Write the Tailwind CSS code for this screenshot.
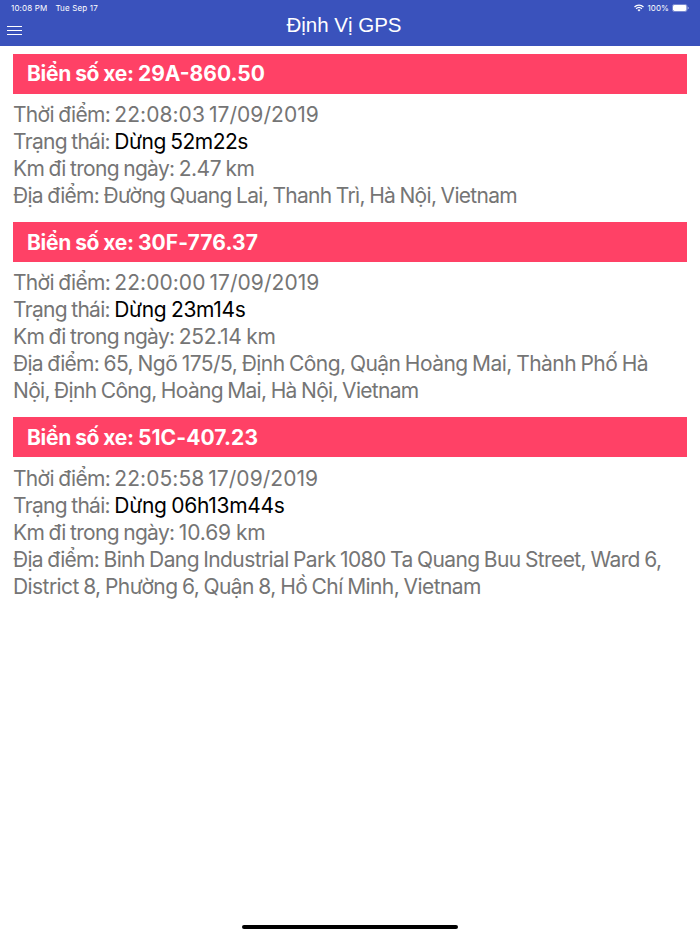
<!DOCTYPE html>
<html lang="vi">
<head>
    <meta charset="UTF-8">
    <meta name="viewport" content="width=device-width, initial-scale=1.0">
    <title>Định Vị GPS</title>
    <script src="https://cdn.jsdelivr.net/npm/@tailwindcss/browser@4"></script>
</head>
<body class="bg-white h-screen overflow-hidden flex flex-col font-['Inter',sans-serif] text-[#757575]">
    <!-- Header -->
    <header class="bg-[#3a52bc] h-[46px] shrink-0 text-white">
        <div class="h-4 pl-[11px] pr-[11px] flex items-center justify-between text-[8px] leading-4">
            <div class="flex gap-2 tracking-[0.15px]">
                <span>10:08 PM</span>
                <span>Tue Sep 17</span>
            </div>
            <div class="flex items-center gap-[3px]">
                <svg class="w-[10px] h-2" viewBox="0 0 20 15" fill="none" stroke="currentColor" stroke-width="2.6">
                    <path d="M1 5.5a13 13 0 0 1 18 0M4.2 9a8.5 8.5 0 0 1 11.6 0"/>
                    <path d="M10 14.5l-3-3a4.3 4.3 0 0 1 6 0z" fill="currentColor" stroke="none"/>
                </svg>
                <span class="tracking-[0.1px]">100%</span>
                <svg class="w-[17px] h-2" viewBox="0 0 17 8" fill="currentColor">
                    <rect x=".4" y=".4" width="14.6" height="7.2" rx="2" fill="none" stroke="currentColor" stroke-opacity=".5" stroke-width=".7"/>
                    <rect x="1" y="1" width="13.4" height="6" rx="1.4"/>
                    <path d="M15.8 2.8v2.4q1-.4 1-1.2t-1-1.2z" fill-opacity=".6"/>
                </svg>
            </div>
        </div>
        <div class="h-[30px] grid grid-cols-3 px-[7px]">
            <button class="w-[15px] h-[28px] flex flex-col justify-center gap-[3px]">
                <span class="h-px w-full bg-white"></span>
                <span class="h-px w-full bg-white"></span>
                <span class="h-px w-full bg-white"></span>
            </button>
            <h1 class="text-center pr-3 font-['Liberation_Sans',sans-serif] text-[20.5px] leading-[18px]">Định Vị GPS</h1>
        </div>
    </header>

    <!-- Vehicle list -->
    <main class="grow px-[13px] pt-2 text-[21px] leading-[27px] tracking-[-0.69px] [word-spacing:-0.9px] whitespace-nowrap">
        <section class="mb-[13px]">
            <h2 class="bg-[#ff4166] text-white font-bold h-10 leading-10 px-[14px] mb-[7px] tracking-[-0.3px] [word-spacing:-0.5px]">Biển số xe: <span class="tracking-normal">29A-860.50</span></h2>
            <p>Thời điểm: <span class="tracking-[0.05px] [word-spacing:-2px]">22:08:03 17/09/2019</span></p>
            <p>Trạng thái: <span class="text-black tracking-[-0.5px]">Dừng 52m22s</span></p>
            <p>Km đi trong ngày: <span class="tracking-[-0.5px]">2.47 km</span></p>
            <p>Địa điểm: Đường Quang Lai, Thanh Trì, Hà Nội, Vietnam</p>
        </section>
        <section class="mb-[13px]">
            <h2 class="bg-[#ff4166] text-white font-bold h-10 leading-[42px] px-[14px] mb-[7px] tracking-[-0.3px] [word-spacing:-0.5px]">Biển số xe: <span class="tracking-[0.1px]">30F-776.37</span></h2>
            <p>Thời điểm: <span class="tracking-[0.05px] [word-spacing:-2px]">22:00:00 17/09/2019</span></p>
            <p>Trạng thái: <span class="text-black tracking-[-0.35px]">Dừng 23m14s</span></p>
            <p>Km đi trong ngày: <span class="tracking-[-0.3px]">252.14 km</span></p>
            <p>Địa điểm: <span class="tracking-[-0.55px]">65, Ngõ 175/5, Định Công, Quận Hoàng Mai, Thành Phố Hà</span><br>Nội, Định Công, Hoàng Mai, Hà Nội, Vietnam</p>
        </section>
        <section>
            <h2 class="bg-[#ff4166] text-white font-bold h-10 leading-[42px] px-[14px] mb-2 tracking-[-0.3px] [word-spacing:-0.5px]">Biển số xe: <span class="tracking-[0.1px]">51C-407.23</span></h2>
            <p>Thời điểm: <span class="tracking-[0.05px] [word-spacing:-2px]">22:05:58 17/09/2019</span></p>
            <p>Trạng thái: <span class="text-black tracking-[-0.3px]">Dừng 06h13m44s</span></p>
            <p>Km đi trong ngày: <span class="tracking-[-0.1px]">10.69 km</span></p>
            <p>Địa điểm: <span class="tracking-[-0.61px]">Binh Dang Industrial Park 1080 Ta Quang Buu Street, Ward 6,</span><br><span class="tracking-[-0.58px]">District 8, Phường 6, Quận 8, Hồ Chí Minh, Vietnam</span></p>
        </section>
    </main>

    <!-- Home indicator -->
    <footer class="pb-[5px] flex justify-center">
        <div class="w-[216px] h-1 rounded-full bg-black"></div>
    </footer>
</body>
</html>
